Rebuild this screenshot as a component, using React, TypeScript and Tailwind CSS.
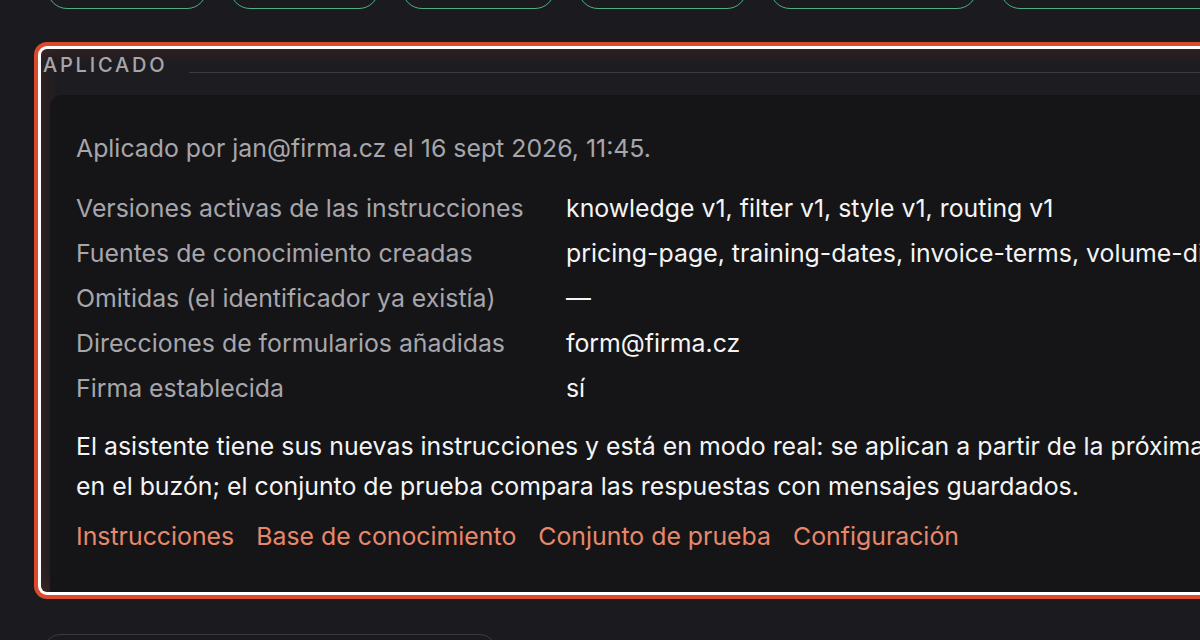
const tabs = [160, 149, 153, 169, 207, 240];

const rows: [string, string][] = [
  ["Versiones activas de las instrucciones", "knowledge v1, filter v1, style v1, routing v1"],
  ["Fuentes de conocimiento creadas", "pricing-page, training-dates, invoice-terms, volume-discounts"],
  ["Omitidas (el identificador ya existía)", "—"],
  ["Direcciones de formularios añadidas", "form@firma.cz"],
  ["Firma establecida", "sí"],
];

const links = ["Instrucciones", "Base de conocimiento", "Conjunto de prueba", "Configuración"];

export default function App() {
  return (
    <div className="h-[640px] w-[1200px] overflow-hidden bg-[#1b1b1f] font-['Inter',sans-serif]">
      {/* tab strip, mostly scrolled off the top */}
      <div className="-mt-[32px] flex gap-[23px] pl-[47px]">
        {tabs.map((w, i) => (
          <div
            key={i}
            style={{ width: w }}
            className="h-[41px] shrink-0 rounded-[20px] border-[1.5px] border-[#4fae85]"
          />
        ))}
      </div>

      <section className="ml-[41px] mt-[40px] w-[1260px] rounded-[6px] bg-[#1d1d21] shadow-[0_0_0_3px_#ffffff,0_0_0_7px_#dc4a2e,inset_0_0_18px_rgba(220,74,46,0.22)]">
        <div className="flex items-end gap-[22px] pl-[2px]">
          <h2 className="text-[20px] font-medium uppercase leading-[32px] tracking-[0.14em] text-[#a6a6ad]">
            Aplicado
          </h2>
          <div className="mb-[8px] h-px flex-1 bg-[#3a3a41]" />
        </div>

        <div className="ml-[9px] mt-[14px] rounded-tl-[12px] bg-[#151517] pb-[39px] pl-[26px] pt-[36px] text-[24.85px] leading-[34px]">
          <p className="whitespace-nowrap text-[#a6a6ac]">Aplicado por jan@firma.cz el 16 sept 2026, 11:45.</p>

          <dl className="mt-[26px] grid grid-cols-[490px_1fr] gap-y-[11px]">
            {rows.map(([k, v]) => (
              <div key={k} className="contents">
                <dt className="whitespace-nowrap text-[#a6a6ac]">{k}</dt>
                <dd className="whitespace-nowrap text-[#f4f4f5]">{v}</dd>
              </div>
            ))}
          </dl>

          <p className="mt-[21px] whitespace-nowrap leading-[40px] text-[#f4f4f5]">
            El asistente tiene sus nuevas instrucciones y está en modo real: se aplican a partir de la próxima consulta
            <br />
            en el buzón; el conjunto de prueba compara las respuestas con mensajes guardados.
          </p>

          <nav className="mt-[13px] flex gap-[22px] text-[#e8876a]">
            {links.map((l) => (
              <a key={l} href="#" className="whitespace-nowrap">
                {l}
              </a>
            ))}
          </nav>
        </div>
      </section>

      <div className="ml-[44px] mt-[42px] h-[60px] w-[452px] rounded-[16px] border border-[#3a3a41]" />
    </div>
  );
}
